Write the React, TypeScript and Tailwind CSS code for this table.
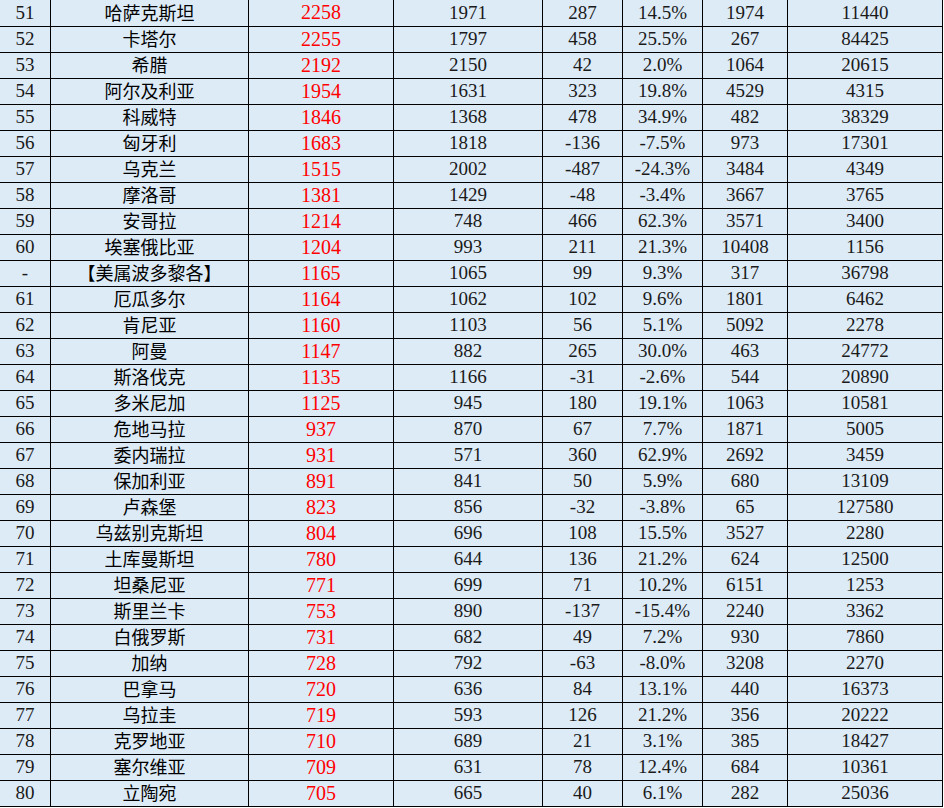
const rows: [string, string, number, number, number, string, number, number][] = [
  ['51', '哈萨克斯坦', 2258, 1971, 287, '14.5%', 1974, 11440],
  ['52', '卡塔尔', 2255, 1797, 458, '25.5%', 267, 84425],
  ['53', '希腊', 2192, 2150, 42, '2.0%', 1064, 20615],
  ['54', '阿尔及利亚', 1954, 1631, 323, '19.8%', 4529, 4315],
  ['55', '科威特', 1846, 1368, 478, '34.9%', 482, 38329],
  ['56', '匈牙利', 1683, 1818, -136, '-7.5%', 973, 17301],
  ['57', '乌克兰', 1515, 2002, -487, '-24.3%', 3484, 4349],
  ['58', '摩洛哥', 1381, 1429, -48, '-3.4%', 3667, 3765],
  ['59', '安哥拉', 1214, 748, 466, '62.3%', 3571, 3400],
  ['60', '埃塞俄比亚', 1204, 993, 211, '21.3%', 10408, 1156],
  ['-', '【美属波多黎各】', 1165, 1065, 99, '9.3%', 317, 36798],
  ['61', '厄瓜多尔', 1164, 1062, 102, '9.6%', 1801, 6462],
  ['62', '肯尼亚', 1160, 1103, 56, '5.1%', 5092, 2278],
  ['63', '阿曼', 1147, 882, 265, '30.0%', 463, 24772],
  ['64', '斯洛伐克', 1135, 1166, -31, '-2.6%', 544, 20890],
  ['65', '多米尼加', 1125, 945, 180, '19.1%', 1063, 10581],
  ['66', '危地马拉', 937, 870, 67, '7.7%', 1871, 5005],
  ['67', '委内瑞拉', 931, 571, 360, '62.9%', 2692, 3459],
  ['68', '保加利亚', 891, 841, 50, '5.9%', 680, 13109],
  ['69', '卢森堡', 823, 856, -32, '-3.8%', 65, 127580],
  ['70', '乌兹别克斯坦', 804, 696, 108, '15.5%', 3527, 2280],
  ['71', '土库曼斯坦', 780, 644, 136, '21.2%', 624, 12500],
  ['72', '坦桑尼亚', 771, 699, 71, '10.2%', 6151, 1253],
  ['73', '斯里兰卡', 753, 890, -137, '-15.4%', 2240, 3362],
  ['74', '白俄罗斯', 731, 682, 49, '7.2%', 930, 7860],
  ['75', '加纳', 728, 792, -63, '-8.0%', 3208, 2270],
  ['76', '巴拿马', 720, 636, 84, '13.1%', 440, 16373],
  ['77', '乌拉圭', 719, 593, 126, '21.2%', 356, 20222],
  ['78', '克罗地亚', 710, 689, 21, '3.1%', 385, 18427],
  ['79', '塞尔维亚', 709, 631, 78, '12.4%', 684, 10361],
  ['80', '立陶宛', 705, 665, 40, '6.1%', 282, 25036],
]

const cell = 'flex items-center justify-center border-r border-black whitespace-nowrap leading-none'
const num = `${cell} pb-[2px] font-['Liberation_Serif',serif] text-[19px] text-[#1a1a1a]`

export default function App() {
  return (
    <div className="w-[944px] h-[808px] bg-white">
      <div className="w-[943px] bg-[#ddebf7]">
        {rows.map((r, i) => (
          <div
            key={r[0] + r[1]}
            className={`grid grid-cols-[51px_198px_145px_149px_80px_80px_85px_155px] border-b border-black ${i === 0 ? 'h-[27px]' : 'h-[26px]'}`}
          >
            <div className={num}>{r[0]}</div>
            <div className={`${cell} pb-[3px] font-['Noto_Sans_CJK_SC',sans-serif] text-[18px] text-black`}>{r[1]}</div>
            <div className={`${cell} pb-[2px] font-['Liberation_Serif',serif] text-[20px] text-[#ff0000]`}>{r[2]}</div>
            <div className={num}>{r[3]}</div>
            <div className={num}>{r[4]}</div>
            <div className={num}>{r[5]}</div>
            <div className={num}>{r[6]}</div>
            <div className={num}>{r[7]}</div>
          </div>
        ))}
      </div>
    </div>
  )
}
